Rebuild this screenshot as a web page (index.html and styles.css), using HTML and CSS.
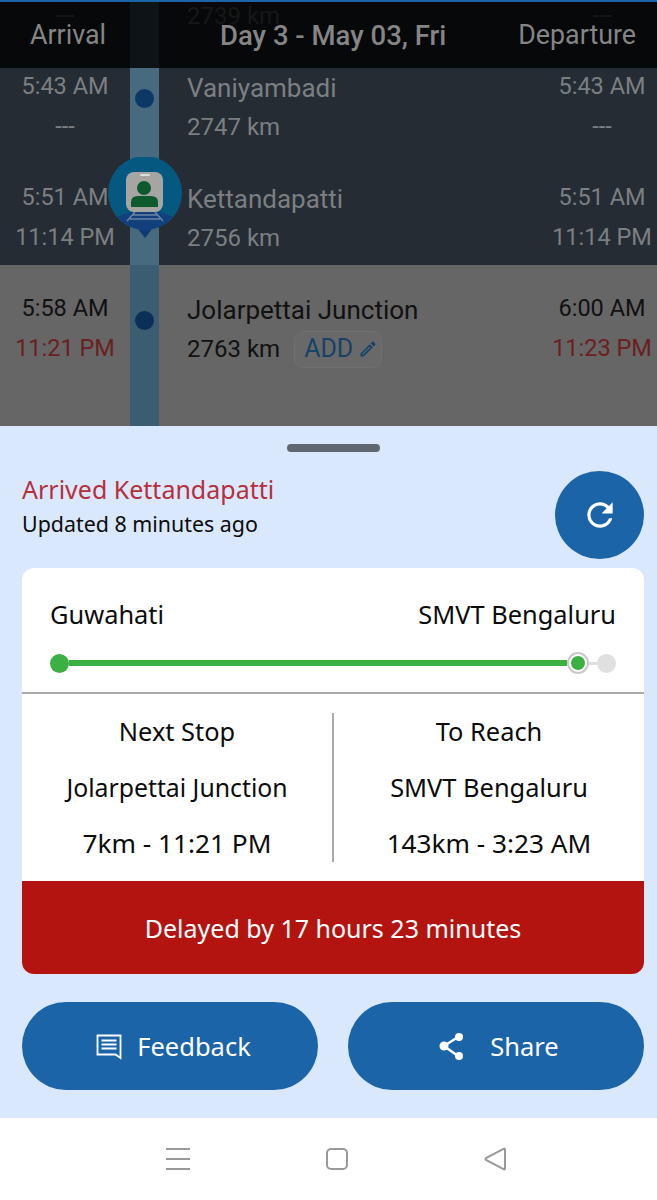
FILE: index.html
```html
<!DOCTYPE html>
<html lang="en">
  <head>
    <meta charset="UTF-8" />
    <meta name="viewport" content="width=device-width, initial-scale=1.0" />
    <title>Running Status</title>
    <link rel="stylesheet" href="styles.css">
  </head>
  <body>
    <div class="schedule">
      <div class="stops">
        <div class="stop dim">
          <div class="time"><span>---</span><span>---</span></div>
          <div class="station"><span class="name">&nbsp;</span><span class="km">2739 km</span></div>
          <div class="time"><span>---</span><span>---</span></div>
        </div>
        <div class="stop dim">
          <div class="time"><span>5:43 AM</span><span>---</span></div>
          <div class="station"><span class="name">Vaniyambadi</span><span class="km">2747 km</span></div>
          <div class="time"><span>5:43 AM</span><span>---</span></div>
        </div>
        <div class="stop dim">
          <div class="time"><span>5:51 AM</span><span>11:14 PM</span></div>
          <div class="station"><span class="name">Kettandapatti</span><span class="km">2756 km</span></div>
          <div class="time"><span>5:51 AM</span><span>11:14 PM</span></div>
        </div>
        <div class="stop">
          <div class="time"><span>5:58 AM</span><span class="late">11:21 PM</span></div>
          <div class="station">
            <span class="name">Jolarpettai Junction</span>
            <span class="km">2763 km <span class="add">ADD
              <svg width="20" height="20" viewBox="0 0 24 24"><path d="M3 17.250V21h3.750L17.810 9.940l-3.750-3.750L3 17.250zM5.920 19H5v-.920l9.060-9.060.920.920L5.920 19zM20.710 7.040a1 1 0 0 0 0-1.410l-2.340-2.340a1 1 0 0 0-1.410 0l-1.830 1.830 3.750 3.750 1.830-1.830z" fill="#174268"/></svg>
            </span></span>
          </div>
          <div class="time"><span>6:00 AM</span><span class="late">11:23 PM</span></div>
        </div>
      </div>

      <div class="track"></div>
      <div class="dot dot-one"></div>
      <div class="dot dot-two"></div>
      <svg class="pin" width="74" height="82" viewBox="0 0 74 82">
        <path d="M27 68L37 81L47 68z" fill="#0f3a72"/>
        <circle cx="37" cy="36" r="37" fill="#05587f"/>
        <path d="M9 60L22 55H52L65 60Q55 72 37 73Q19 72 9 60z" fill="#12407c"/>
        <path d="M27 55L19 64M47 55L55 64M25 58H49M22 62H52" stroke="#6f83a3" stroke-width="1.500" fill="none"/>
        <rect x="18" y="15" width="37" height="40" rx="8" fill="#a5a5a3"/>
        <rect x="32" y="17" width="10" height="2" rx="1" fill="#dcdcdc"/>
        <circle cx="36" cy="31" r="7" fill="#0d5a2c"/>
        <path d="M23 50V45Q23 39 30 39H43Q50 39 50 45V50z" fill="#0d5a2c"/>
      </svg>

      <div class="top-bar">
        <span>Arrival</span>
        <span class="day">Day 3 - May 03, Fri</span>
        <span>Departure</span>
      </div>
    </div>

    <div class="sheet">
      <div class="handle"></div>
      <div class="status">
        <div>
          <div class="status-title">Arrived Kettandapatti</div>
          <div class="status-sub">Updated 8 minutes ago</div>
        </div>
        <button class="refresh">
          <svg width="38" height="38" viewBox="0 0 24 24"><path d="M17.650 6.350C16.200 4.900 14.210 4 12 4c-4.420 0-7.990 3.580-7.990 8s3.570 8 7.990 8c3.730 0 6.840-2.550 7.730-6h-2.080c-.820 2.330-3.040 4-5.650 4-3.310 0-6-2.690-6-6s2.690-6 6-6c1.660 0 3.140.690 4.220 1.780L13 11h7V4l-2.350 2.350z" fill="#fff"/></svg>
        </button>
      </div>

      <div class="card">
        <div class="route">
          <div class="route-names"><span>Guwahati</span><span>SMVT Bengaluru</span></div>
          <div class="progress">
            <span class="end-dot done"></span>
            <span class="bar"></span>
            <span class="now"><span></span></span>
            <span class="bar-rest"></span>
            <span class="end-dot"></span>
          </div>
        </div>
        <div class="info">
          <div class="info-col">
            <span>Next Stop</span>
            <span class="long-name">Jolarpettai Junction</span>
            <span class="eta">7km - 11:21 PM</span>
          </div>
          <div class="info-col">
            <span>To Reach</span>
            <span>SMVT Bengaluru</span>
            <span class="eta">143km - 3:23 AM</span>
          </div>
        </div>
        <div class="delay">Delayed by 17 hours 23 minutes</div>
      </div>

      <div class="actions">
        <button class="action feedback">
          <svg width="28" height="28" viewBox="0 0 28 28"><path d="M2.500 3.500H25.500V26L20.500 22.500H2.500z" fill="none" stroke="#fff" stroke-width="1.800"/><path d="M6.500 8.500H21.500M6.500 12.500H21.500M6.500 16.500H21.500" stroke="#fff" stroke-width="1.800"/></svg>
          Feedback
        </button>
        <button class="action share">
          <svg width="28" height="30" viewBox="0 0 28 30"><path d="M20 6L6 15L20 25" fill="none" stroke="#fff" stroke-width="2.500"/><circle cx="21" cy="6" r="4" fill="#fff"/><circle cx="6" cy="15" r="4.500" fill="#fff"/><circle cx="21" cy="25" r="4" fill="#fff"/></svg>
          Share
        </button>
      </div>
    </div>

    <div class="nav">
      <svg width="24" height="24" viewBox="0 0 24 24"><path d="M0 2H24M0 12H24M0 22H24" stroke="#999" stroke-width="2"/></svg>
      <svg width="24" height="24" viewBox="0 0 24 24"><rect x="2" y="2" width="20" height="20" rx="4" fill="none" stroke="#999" stroke-width="2"/></svg>
      <svg width="24" height="24" viewBox="0 0 24 24"><path d="M21 2.500V21.500Q21 23 19.500 22L2 13Q1 12 2 11L19.500 2Q21 1 21 2.500z" fill="none" stroke="#999" stroke-width="2"/></svg>
    </div>
  </body>
</html>
```

FILE: styles.css
```css
body {
  margin: 0;
  padding: 0;
  width: 657px;
  height: 1200px;
  overflow: hidden;
  font-family: "Noto Sans", sans-serif;
  background-color: #fff;
}
button {
  border: none;
  outline: none;
  font-family: inherit;
}
.schedule {
  position: relative;
  height: 426px;
  overflow: hidden;
  background-color: #666;
  font-family: Roboto, sans-serif;
}
.stops {
  margin-top: -68px;
}
.stop {
  display: flex;
  height: 111px;
  color: #111;
}
.stop.dim {
  background-color: #262c33;
  color: #7b7f82;
}
.time {
  display: flex;
  flex-direction: column;
  align-items: center;
  flex: none;
  width: 130px;
  padding-top: 28px;
  font-size: 23.5px;
  line-height: 30px;
  gap: 10px;
}
.time:last-child {
  width: 110px;
}
.late {
  color: #6a1f20;
}
.station {
  flex: 1;
  display: flex;
  flex-direction: column;
  gap: 7px;
  padding-left: 57px;
  padding-top: 28px;
}
.name {
  font-size: 26px;
  line-height: 34px;
}
.km {
  display: flex;
  align-items: center;
  height: 30px;
  font-size: 24px;
  line-height: 30px;
}
.add {
  display: flex;
  align-items: center;
  gap: 5px;
  margin-left: 14px;
  height: 37px;
  padding: 0 3px 0 9px;
  box-sizing: border-box;
  border: 1px solid #707070;
  border-radius: 10px;
  background-color: #696969;
  color: #174268;
  font-size: 25px;
}
.track {
  position: absolute;
  left: 130px;
  top: 0;
  bottom: 0;
  width: 29px;
  background: linear-gradient(#486a7e 265px, #3a5d71 265px);
}
.dot {
  position: absolute;
  left: 135px;
  width: 19px;
  height: 19px;
  border-radius: 50%;
  background-color: #0c3866;
}
.dot-one {
  top: 89px;
}
.dot-two {
  top: 311px;
  background-color: #0a3058;
}
.pin {
  position: absolute;
  left: 108px;
  top: 157px;
}
.top-bar {
  position: absolute;
  left: 0;
  top: 0;
  right: 0;
  height: 68px;
  box-sizing: border-box;
  border-top: 2px solid #1c64a8;
  display: flex;
  justify-content: space-between;
  align-items: center;
  padding: 0 21px 0 30px;
  background-color: rgba(0, 0, 0, 0.82);
  color: #858585;
  font-size: 26.8px;
}
.day {
  margin-left: 42px;
  font-size: 27.5px;
  font-weight: 500;
}
.sheet {
  height: 692px;
  box-sizing: border-box;
  padding: 18px 13px 0 22px;
  background-color: #d9e8fd;
}
.handle {
  width: 93px;
  height: 8px;
  margin: 0 auto;
  border-radius: 4px;
  background-color: #5f6670;
}
.status {
  display: flex;
  justify-content: space-between;
  margin-top: 19px;
  height: 97px;
}
.status-title {
  margin-top: 1px;
  font-size: 25px;
  line-height: 34px;
  color: #b5303a;
}
.status-sub {
  margin-top: 1px;
  font-size: 21.4px;
  line-height: 34px;
  color: #0c0c0c;
}
.refresh {
  width: 89px;
  height: 88px;
  padding: 0;
  border-radius: 50%;
  display: flex;
  align-items: center;
  justify-content: center;
  background-color: #1c64a8;
}
.card {
  height: 406px;
  display: flex;
  flex-direction: column;
  border-radius: 12px;
  overflow: hidden;
  background-color: #fff;
}
.route {
  height: 126px;
  box-sizing: border-box;
  padding: 29px 28px 0;
  border-bottom: 2px solid #aaa;
}
.route-names {
  display: flex;
  justify-content: space-between;
  font-size: 25.4px;
  line-height: 34px;
  color: #0c0c0c;
}
.progress {
  display: flex;
  align-items: center;
  margin-top: 21px;
}
.end-dot {
  flex: none;
  width: 19px;
  height: 19px;
  border-radius: 50%;
  background-color: #e0e0e0;
}
.end-dot.done {
  background-color: #3cb043;
}
.bar {
  flex: 1;
  height: 6px;
  background-color: #3cb043;
}
.bar-rest {
  flex: none;
  width: 8px;
  height: 3px;
  background-color: #ddd;
}
.now {
  flex: none;
  width: 22px;
  height: 22px;
  box-sizing: border-box;
  border: 2px solid #c9c9c9;
  border-radius: 50%;
  display: flex;
  align-items: center;
  justify-content: center;
  background-color: #fff;
}
.now span {
  width: 14px;
  height: 14px;
  border-radius: 50%;
  background-color: #3cb043;
}
.info {
  flex: 1;
  display: flex;
  padding: 19px 0;
}
.info-col {
  flex: 1;
  display: flex;
  flex-direction: column;
  align-items: center;
  justify-content: space-between;
  padding: 1px 0 2px;
  font-size: 25.4px;
  line-height: 34px;
  color: #0c0c0c;
}
.info-col:first-child {
  border-right: 2px solid #aaa;
}
.long-name {
  font-size: 24.8px;
}
.eta {
  font-size: 26.2px;
}
.delay {
  height: 93px;
  display: flex;
  align-items: center;
  justify-content: center;
  background-color: #b41410;
  color: #fff;
  font-size: 25px;
}
.actions {
  display: flex;
  justify-content: space-between;
  margin-top: 28px;
}
.action {
  flex: none;
  width: 296px;
  height: 88px;
  display: flex;
  align-items: center;
  justify-content: center;
  gap: 14px;
  border-radius: 44px;
  background-color: #1c64a8;
  color: #fff;
  font-size: 25.5px;
}
.feedback {
  padding-left: 12px;
}
.share {
  padding-left: 11px;
}
.share svg {
  margin-right: 10px;
}
.nav {
  height: 82px;
  display: flex;
  justify-content: center;
  gap: 135px;
  padding: 29px 0 0 16px;
  box-sizing: border-box;
}
```
